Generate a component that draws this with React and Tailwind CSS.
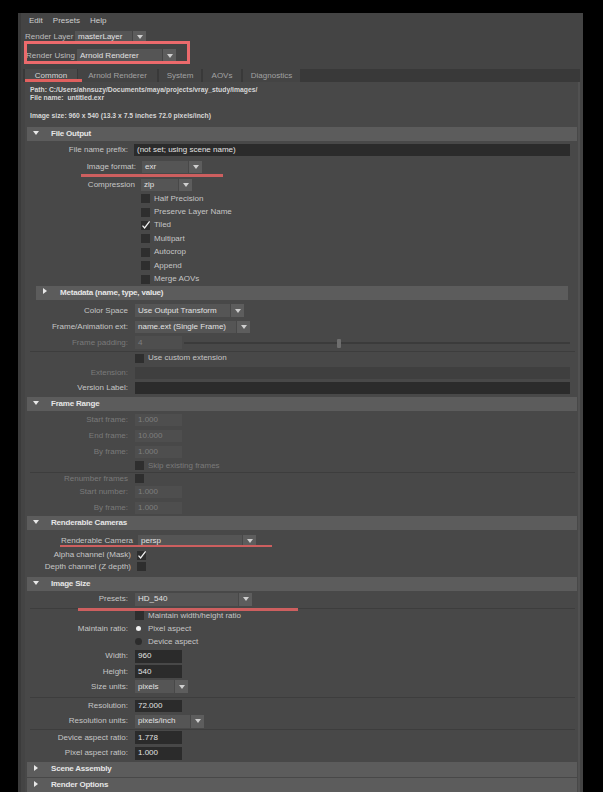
import React from "react";

function Arrow() {
  return <div className="w-0 h-0 border-l-[3px] border-r-[3px] border-t-[4px] border-l-transparent border-r-transparent border-t-[#cfcfcf]" />;
}

function Dropdown({ text, bw, h = "h-[12px]" }) {
  return (
    <div className={`flex ${h}`}>
      <div className={`${bw} bg-[#555555] flex items-center pl-[3px] text-[#e2e2e2] whitespace-nowrap overflow-hidden`}>{text}</div>
      <div className="ml-px w-[13px] bg-[#5d5d5d] flex items-center justify-center"><Arrow /></div>
    </div>
  );
}

function Field({ text, w = "w-[47px]", h = "h-[12px]", disabled, bg }) {
  const b = bg || (disabled ? "bg-[#4e4e4e]" : "bg-[#2b2b2b]");
  return (
    <div className={`${w} ${h} ${b} flex items-center pl-[3px] whitespace-nowrap ${disabled ? "text-[#7e7e7e]" : "text-[#e2e2e2]"}`}>{text}</div>
  );
}

function Check({ checked }) {
  return (
    <div className="w-[9px] h-[9px] bg-[#2e2e2e] shrink-0 relative">
      {checked && (
        <svg className="absolute left-0 top-[-1px]" width="10" height="10" viewBox="0 0 10 10">
          <path d="M1.5 5.6 L3.6 7.9 L8.6 1.4" fill="none" stroke="#f2f2f2" strokeWidth="1.3" />
        </svg>
      )}
    </div>
  );
}

function Row({ h, label, lw = "w-[103px]", gap = "ml-[7px]", disabled, children }) {
  return (
    <div className={`flex items-center ${h}`}>
      <div className={`${lw} shrink-0 text-right whitespace-nowrap ${disabled ? "text-[#7a7a7a]" : "text-[#c6c6c6]"}`}>{label}</div>
      <div className={`${gap} flex items-center`}>{children}</div>
    </div>
  );
}

function CheckRow({ h, pl, label, checked, disabled }) {
  return (
    <div className={`flex items-center ${h} ${pl}`}>
      <Check checked={checked} />
      <div className={`ml-[4px] whitespace-nowrap ${disabled ? "text-[#7a7a7a]" : "text-[#c6c6c6]"}`}>{label}</div>
    </div>
  );
}

function Header({ label, open = true, h = "h-[14px]", extra = "" }) {
  return (
    <div className={`ml-[2px] w-[550px] ${h} ${extra} bg-[#5c5c5c] flex items-center`}>
      {open ? (
        <div className="ml-[6px] w-0 h-0 border-l-[3px] border-r-[3px] border-t-[4px] border-l-transparent border-r-transparent border-t-[#e8e8e8] self-start mt-[4px]" />
      ) : (
        <div className="ml-[7px] w-0 h-0 border-t-[3px] border-b-[3px] border-l-[4px] border-t-transparent border-b-transparent border-l-[#e8e8e8] self-start mt-[3px]" />
      )}
      <div className={`${open ? "ml-[12px]" : "ml-[13px]"} font-bold tracking-[-0.2px] text-[#e6e6e6] whitespace-nowrap`}>{label}</div>
    </div>
  );
}

function Sep({ extra = "" }) {
  return <div className={`ml-[5px] w-[545px] h-px bg-[#3d3d3d] ${extra}`} />;
}

export default function App() {
  return (
    <div className="relative w-[603px] h-[792px] bg-black overflow-hidden pl-[18px] pt-[13px] font-['Liberation_Sans',Arial,sans-serif] text-[8px] leading-none">
      <div className="w-[565px] h-[779px] bg-[#444444] border-l-[3px] border-[#3b3b3b] flex flex-col">
        {/* menu */}
        <div className="h-[16px] flex items-center gap-[10px] pl-[8px] text-[#d0d0d0] shrink-0">
          <span>Edit</span>
          <span>Presets</span>
          <span>Help</span>
        </div>
        {/* render layer */}
        <div className="mt-[2px] h-[12px] flex items-center pl-[4px] shrink-0">
          <div className="w-[50px] text-[#bdbdbd] whitespace-nowrap">Render Layer</div>
          <Dropdown text="masterLayer" bw="w-[57px]" h="h-[12px]" />
        </div>
        {/* render using */}
        <div className="mt-[6px] h-[13px] flex items-center pl-[5px] shrink-0">
          <div className="w-[51px] text-[#bdbdbd] whitespace-nowrap">Render Using</div>
          <Dropdown text="Arnold Renderer" bw="w-[85px]" h="h-[13px]" />
        </div>
        {/* tabs */}
        <div className="mt-[7px] h-[13px] ml-[2px] w-[557px] bg-[#393939] flex shrink-0">
          <div className="ml-[2px] w-[52px] bg-[#4b4b4b] flex items-center justify-center text-[#d6d6d6]">Common</div>
          <div className="ml-px w-[79px] bg-[#444444] flex items-center justify-center text-[#a2a2a2]">Arnold Renderer</div>
          <div className="ml-[2px] w-[42px] bg-[#444444] flex items-center justify-center text-[#a2a2a2]">System</div>
          <div className="ml-[2px] w-[38px] bg-[#444444] flex items-center justify-center text-[#a2a2a2]">AOVs</div>
          <div className="ml-[2px] w-[57px] bg-[#444444] flex items-center justify-center text-[#a2a2a2]">Diagnostics</div>
        </div>
        {/* content */}
        <div className="ml-[4px] w-[555px] flex-1 bg-[#484848] border-r-2 border-[#515151] flex flex-col">
          <div className="h-[45px] pt-[4px] pl-[5px] text-[6.8px] font-bold text-[#d6d6d6] shrink-0">
            <div className="h-[8px] leading-[8px]">Path: C:/Users/ahnsuzy/Documents/maya/projects/vray_study/images/</div>
            <div className="h-[8px] leading-[8px]">File name:&nbsp; untitled.exr</div>
            <div className="h-[8px] leading-[8px] mt-[10px]">Image size: 960 x 540 (13.3 x 7.5 inches 72.0 pixels/inch)</div>
          </div>

          <Header label="File Output" />
          <Row h="h-[18px]" label="File name prefix:" gap="ml-[6px]">
            <Field text="(not set; using scene name)" w="w-[436px]" h="h-[12px]" />
          </Row>
          <Row h="h-[15px]" label="Image format:" lw="w-[111px]" gap="ml-[6px]">
            <Dropdown text="exr" bw="w-[46px]" />
          </Row>
          <div className="mt-[4px]">
            <Row h="h-[13px]" label="Compression" lw="w-[110px]" gap="ml-[6px]">
              <Dropdown text="zip" bw="w-[37px]" />
            </Row>
          </div>
          <div className="mt-px">
            <CheckRow h="h-[13.4px]" pl="pl-[116px]" label="Half Precision" />
            <CheckRow h="h-[13.4px]" pl="pl-[116px]" label="Preserve Layer Name" />
            <CheckRow h="h-[13.4px]" pl="pl-[116px]" label="Tiled" checked />
            <CheckRow h="h-[13.4px]" pl="pl-[116px]" label="Multipart" />
            <CheckRow h="h-[13.4px]" pl="pl-[116px]" label="Autocrop" />
            <CheckRow h="h-[13.4px]" pl="pl-[116px]" label="Append" />
            <CheckRow h="h-[13.4px]" pl="pl-[116px]" label="Merge AOVs" />
          </div>
          <div className="ml-[11px] w-[532px] h-[14px] bg-[#5c5c5c] flex items-center shrink-0">
            <div className="ml-[7px] w-0 h-0 border-t-[3px] border-b-[3px] border-l-[4px] border-t-transparent border-b-transparent border-l-[#e8e8e8] self-start mt-[2px]" />
            <div className="ml-[13px] font-bold tracking-[-0.2px] text-[#e6e6e6] whitespace-nowrap">Metadata (name, type, value)</div>
          </div>
          <div className="mt-[3px]">
            <Row h="h-[16px]" label="Color Space">
              <Dropdown text="Use Output Transform" bw="w-[95px]" h="h-[13px]" />
            </Row>
          </div>
          <Row h="h-[16px]" label="Frame/Animation ext:">
            <Dropdown text="name.ext (Single Frame)" bw="w-[101px]" h="h-[12px]" />
          </Row>
          <Row h="h-[16px]" label="Frame padding:" disabled>
            <Field text="4" disabled h="h-[13px]" />
            <div className="ml-[2px] w-[386px] h-[2px] bg-[#3b3b3b] relative">
              <div className="absolute left-[153px] top-[-3px] w-[4px] h-[9px] rounded-[1px] bg-[#6e6e6e]" />
            </div>
          </Row>
          <Sep />
          <CheckRow h="h-[13px]" pl="pl-[110px]" label="Use custom extension" />
          <Row h="h-[16px]" label="Extension:" disabled>
            <Field text="" w="w-[435px]" bg="bg-[#3f3f3f]" />
          </Row>
          <Row h="h-[14px]" label="Version Label:">
            <Field text="" w="w-[435px]" />
          </Row>

          <Header label="Frame Range" extra="mt-[2px]" />
          <div className="mt-px">
            <Row h="h-[16px]" label="Start frame:" disabled><Field text="1.000" disabled /></Row>
          </div>
          <Row h="h-[16px]" label="End frame:" disabled><Field text="10.000" disabled /></Row>
          <Row h="h-[16px]" label="By frame:" disabled><Field text="1.000" disabled /></Row>
          <CheckRow h="h-[12px]" pl="pl-[110px]" label="Skip existing frames" disabled />
          <Sep />
          <Row h="h-[12px]" label="Renumber frames" disabled><Check /></Row>
          <Row h="h-[15px]" label="Start number:" disabled><Field text="1.000" disabled /></Row>
          <Row h="h-[16px]" label="By frame:" disabled><Field text="1.000" disabled /></Row>

          <Header label="Renderable Cameras" />
          <div className="mt-[3px]">
            <Row h="h-[16px]" label="Renderable Camera" lw="w-[108px]" gap="ml-[5px]">
              <Dropdown text="persp" bw="w-[104px]" h="h-[12px]" />
            </Row>
          </div>
          <Row h="h-[13px]" label="Alpha channel (Mask)" lw="w-[106px]" gap="ml-[6px]"><Check checked /></Row>
          <Row h="h-[10px]" label="Depth channel (Z depth)" lw="w-[106px]" gap="ml-[6px]"><Check /></Row>

          <Header label="Image Size" extra="mt-[5px]" />
          <Row h="h-[17px]" label="Presets:">
            <Dropdown text="HD_540" bw="w-[103px]" h="h-[13px]" />
          </Row>
          <Sep />
          <CheckRow h="h-[14px]" pl="pl-[110px]" label="Maintain width/height ratio" />
          <Row h="h-[12px]" label="Maintain ratio:">
            <div className="w-[5px] h-[5px] rounded-full bg-[#f0f0f0] ml-[1px]" />
            <div className="ml-[7px] text-[#c6c6c6]">Pixel aspect</div>
          </Row>
          <Row h="h-[14px]" label="">
            <div className="w-[7px] h-[7px] rounded-full bg-[#2c2c2c]" />
            <div className="ml-[6px] text-[#c6c6c6]">Device aspect</div>
          </Row>
          <Row h="h-[15px]" label="Width:"><Field text="960" h="h-[13px]" /></Row>
          <Row h="h-[16px]" label="Height:"><Field text="540" h="h-[13px]" /></Row>
          <Row h="h-[14px]" label="Size units:">
            <Dropdown text="pixels" bw="w-[39px]" h="h-[13px]" />
          </Row>
          <Sep extra="mt-[3px]" />
          <Row h="h-[16px]" label="Resolution:"><Field text="72.000" h="h-[12px]" /></Row>
          <Row h="h-[15px]" label="Resolution units:">
            <Dropdown text="pixels/inch" bw="w-[55px]" h="h-[13px]" />
          </Row>
          <Sep />
          <Row h="h-[16px]" label="Device aspect ratio:"><Field text="1.778" h="h-[13px]" /></Row>
          <Row h="h-[15px]" label="Pixel aspect ratio:"><Field text="1.000" h="h-[13px]" /></Row>

          <Header label="Scene Assembly" open={false} h="h-[15px]" extra="mt-px" />
          <Header label="Render Options" open={false} h="h-[15px]" extra="mt-px" />
        </div>
      </div>

      {/* annotations */}
      <div className="absolute left-[24px] top-[41px] w-[166px] h-[23px] border-[3px] border-[#ec6a6c]" />
      <div className="absolute left-[25px] top-[79px] w-[57px] h-[3px] bg-[#e0605f]" />
      <div className="absolute left-[81px] top-[174px] w-[142px] h-[3px] bg-[#cd5f5f]" />
      <div className="absolute left-[60px] top-[545px] w-[212px] h-[2px] bg-[#cd5f5f]" />
      <div className="absolute left-[78px] top-[608px] w-[220px] h-[3px] bg-[#cd5f5f]" />
    </div>
  );
}
